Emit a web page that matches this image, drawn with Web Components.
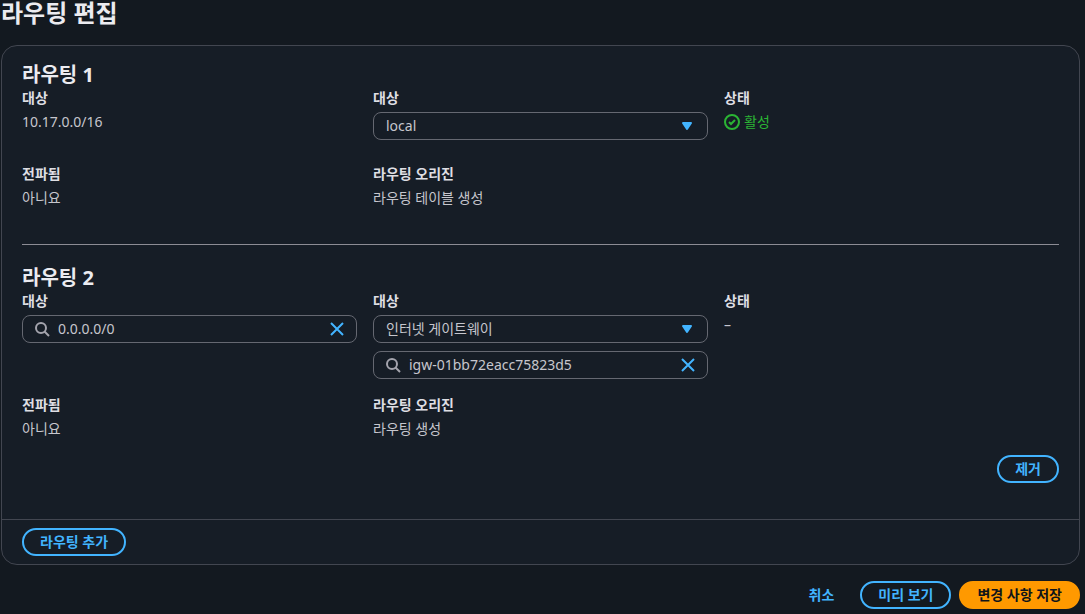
<!DOCTYPE html>
<html lang="ko">
<head>
<meta charset="utf-8">
<meta name="viewport" content="width=device-width, initial-scale=1">
<title>라우팅 편집</title>
<style>
  html { background: #131920; }
  body {
    margin: 0;
    color: #c6c6cd;
    font: 14px/20px "Noto Sans", "Noto Sans CJK KR", sans-serif;
  }
</style>
</head>
<body>
<edit-routes-page>
  <route-container>
    <route-item heading="라우팅 1">
      <form-field label="대상">10.17.0.0/16</form-field>
      <form-field label="대상"><select-box label="대상" value="local"></select-box><div></div></form-field>
      <form-field label="상태"><status-indicator>활성</status-indicator></form-field>
      <form-field label="전파됨">아니요</form-field>
      <form-field label="라우팅 오리진">라우팅 테이블 생성</form-field>
    </route-item>
    <route-item heading="라우팅 2" removable>
      <form-field label="대상"><search-box label="대상" value="0.0.0.0/0"></search-box></form-field>
      <form-field label="대상">
        <select-box label="대상" value="인터넷 게이트웨이"></select-box>
        <search-box label="인터넷 게이트웨이" value="igw-01bb72eacc75823d5"></search-box>
      </form-field>
      <form-field label="상태">–</form-field>
      <form-field label="전파됨">아니요</form-field>
      <form-field label="라우팅 오리진">라우팅 생성</form-field>
      <pill-button slot="action">제거</pill-button>
    </route-item>
    <pill-button slot="footer">라우팅 추가</pill-button>
  </route-container>
  <pill-button slot="actions" variant="link">취소</pill-button>
  <pill-button slot="actions">미리 보기</pill-button>
  <pill-button slot="actions" variant="primary">변경 사항 저장</pill-button>
</edit-routes-page>

<script>
class BaseElement extends HTMLElement {
  connectedCallback() {
    if (this.shadowRoot) return;
    this.attachShadow({ mode: 'open' }).innerHTML = this.render();
  }
  attr(name) { return this.getAttribute(name) || ''; }
}

customElements.define('edit-routes-page', class extends BaseElement {
  render() {
    return `<style>
      :host { display: block; padding: 0 5px 0 1px; }
      h1 { margin: 0 0 19px; color: #ebebf0; font-size: 24px; line-height: 26px; font-weight: 700; }
      .actions { display: flex; justify-content: flex-end; gap: 8px; margin-top: 16px; padding-bottom: 4px; }
    </style>
    <h1>라우팅 편집</h1>
    <slot></slot>
    <div class="actions"><slot name="actions"></slot></div>`;
  }
});

customElements.define('route-container', class extends BaseElement {
  render() {
    return `<style>
      :host { display: block; background: #161d26; border: 1px solid #424650; border-radius: 16px; }
      .content { padding: 16px 20px 36px; }
      .footer { border-top: 1px solid #424650; padding: 8px 20px; }
    </style>
    <div class="content"><slot></slot></div>
    <div class="footer"><slot name="footer"></slot></div>`;
  }
});

customElements.define('route-item', class extends BaseElement {
  render() {
    return `<style>
      :host { display: block; }
      :host(:not(:first-of-type)) { margin-top: 36px; border-top: 1px solid #8c8c94; padding-top: 20px; }
      h2 { margin: 0; color: #ebebf0; font-size: 20px; line-height: 26px; font-weight: 700; }
      .grid { display: grid; grid-template-columns: repeat(3, minmax(0, 1fr)); column-gap: 16px; row-gap: 16px; }
      .action { display: flex; justify-content: flex-end; margin-top: 16px; }
    </style>
    <h2>${this.attr('heading')}</h2>
    <div class="grid"><slot></slot></div>
    ${this.hasAttribute('removable') ? '<div class="action"><slot name="action"></slot></div>' : ''}`;
  }
});

customElements.define('form-field', class extends BaseElement {
  render() {
    return `<style>
      :host { display: block; }
      .label { color: #dedee3; font-weight: 700; }
      .value { display: flex; flex-direction: column; gap: 8px; margin-top: 4px; }
    </style>
    <div class="label">${this.attr('label')}</div>
    <div class="value"><slot></slot></div>`;
  }
});

customElements.define('select-box', class extends BaseElement {
  render() {
    return `<style>
      :host { display: grid; align-items: center; }
      select {
        grid-area: 1 / 1; width: 100%; height: 28px; box-sizing: border-box; margin: 0; padding: 0 40px 0 12px;
        appearance: none; background: none; border: 1px solid #656871; border-radius: 8px;
        color: inherit; font: inherit;
      }
      option { background: #161d26; }
      svg { grid-area: 1 / 1; justify-self: end; margin-right: 13px; pointer-events: none; }
    </style>
    <select aria-label="${this.attr('label')}"><option>${this.attr('value')}</option></select>
    <svg width="16" height="16" viewBox="0 0 16 16"><path d="M4 5h8l-4 6z" fill="#42b4ff" stroke="#42b4ff" stroke-width="2" stroke-linejoin="round"/></svg>`;
  }
});

customElements.define('search-box', class extends BaseElement {
  render() {
    return `<style>
      :host {
        display: flex; align-items: center; height: 28px; box-sizing: border-box; padding: 0 11px;
        border: 1px solid #656871; border-radius: 8px;
      }
      svg { display: block; flex: none; }
      input { flex: 1; min-width: 0; padding: 0 8px; border: 0; outline: 0; background: none; color: inherit; font: inherit; }
      button { padding: 0; border: 0; background: none; cursor: pointer; }
    </style>
    <svg width="16" height="16" viewBox="0 0 16 16" fill="none" stroke="#a4a4ad" stroke-width="2"><circle cx="7" cy="7" r="5"/><path d="M10.5 10.5 15 15"/></svg>
    <input type="text" aria-label="${this.attr('label')}" value="${this.attr('value')}">
    <button type="button" aria-label="지우기"><svg width="16" height="16" viewBox="0 0 16 16" fill="none" stroke="#42b4ff" stroke-width="2"><path d="m2 2 12 12M14 2 2 14"/></svg></button>`;
  }
});

customElements.define('status-indicator', class extends BaseElement {
  render() {
    return `<style>
      :host { display: flex; align-items: center; gap: 4px; color: #2bb534; }
    </style>
    <svg width="16" height="16" viewBox="0 0 16 16" fill="none" stroke="currentColor" stroke-width="2"><circle cx="8" cy="8" r="7"/><path d="m5 8 2 2 4-4"/></svg>
    <span><slot></slot></span>`;
  }
});

customElements.define('pill-button', class extends BaseElement {
  render() {
    return `<style>
      :host { display: inline-block; vertical-align: top; }
      button {
        display: block; height: 28px; box-sizing: border-box; margin: 0; padding: 0 16px; border: 2px solid #42b4ff; border-radius: 20px;
        background: none; color: #42b4ff; font: inherit; font-weight: 700; white-space: nowrap; cursor: pointer;
      }
      .link { border-color: transparent; }
      .primary { border-color: #ff9900; background: #ff9900; color: #0f141a; }
    </style>
    <button type="button" class="${this.attr('variant')}"><slot></slot></button>`;
  }
});
</script>
</body>
</html>
